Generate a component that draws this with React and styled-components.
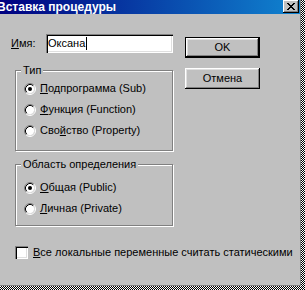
import React from "react";
import styled, { createGlobalStyle } from "styled-components";

const GlobalStyle = createGlobalStyle`
  html, body {
    margin: 0;
    padding: 0;
  }
  body {
    width: 305px;
    height: 290px;
    overflow: hidden;
    font-family: "Liberation Sans", Arial, sans-serif;
    font-size: 11px;
    color: #000;
  }
`;

const Hot = ({ children }) => <u>{children}</u>;

const CloseGlyph = () => (
  <svg width="8" height="7" viewBox="0 0 8 7">
    <path
      fill="#000"
      d="M0 0h2v1H0z M6 0h2v1H6z M1 1h2v1H1z M5 1h2v1H5z M2 2h4v1H2z M3 3h2v1H3z M2 4h4v1H2z M1 5h2v1H1z M5 5h2v1H5z M0 6h2v1H0z M6 6h2v1H6z"
    />
  </svg>
);

const Radio = ({ checked }) => (
  <RadioMark width="12" height="12" viewBox="0 0 12 12">
    <circle cx="6" cy="6" r="4.2" fill="#fff" />
    <path d="M2.11 9.89A5.5 5.5 0 0 1 9.89 2.11" stroke="#808080" fill="none" />
    <path d="M9.89 2.11A5.5 5.5 0 0 1 2.11 9.89" stroke="#fff" fill="none" />
    <path d="M2.82 9.18A4.5 4.5 0 0 1 9.18 2.82" stroke="#000" fill="none" />
    <path d="M9.18 2.82A4.5 4.5 0 0 1 2.82 9.18" stroke="#dfdfdf" fill="none" />
    {checked && <circle cx="6" cy="6" r="2" fill="#000" />}
  </RadioMark>
);

const Option = ({ checked, children }) => (
  <OptionRow>
    <Radio checked={checked} />
    <span>{children}</span>
  </OptionRow>
);

const App = () => {
  return (
    <>
      <GlobalStyle />
      <Screen>
        <Window>
          <TitleBar>
            <Title>Вставка процедуры</Title>
            <CloseButton>
              <CloseGlyph />
            </CloseButton>
          </TitleBar>
          <Body>
            <LeftColumn>
              <NameRow>
                <Label>
                  <Hot>И</Hot>мя:
                </Label>
                <TextField>
                  Оксана
                  <Caret />
                </TextField>
              </NameRow>
              <Group $height={81} $padTop={1}>
                <Legend>Тип</Legend>
                <Option checked>
                  <Hot>П</Hot>одпрограмма (Sub)
                </Option>
                <Option>
                  <Hot>Ф</Hot>ункция (Function)
                </Option>
                <Option>
                  Сво<Hot>й</Hot>ство (Property)
                </Option>
              </Group>
              <Group $height={62} $padTop={6} $gap={13}>
                <Legend>Область определения</Legend>
                <Option checked>
                  <Hot>О</Hot>бщая (Public)
                </Option>
                <Option>
                  <Hot>Л</Hot>ичная (Private)
                </Option>
              </Group>
            </LeftColumn>
            <RightColumn>
              <Button $default>OK</Button>
              <Button>Отмена</Button>
            </RightColumn>
            <CheckRow>
              <CheckBox />
              <span>
                <Hot>В</Hot>се локальные переменные считать статическими
              </span>
            </CheckRow>
          </Body>
        </Window>
      </Screen>
    </>
  );
};

const Screen = styled.div`
  width: 305px;
  height: 290px;
  box-sizing: border-box;
  padding: 0 4px 4px 0;
  background: repeating-conic-gradient(#000 0 25%, #fff 0 50%) 0 0 / 2px 2px;
`;

const Window = styled.div`
  height: 100%;
  box-sizing: border-box;
  display: flex;
  flex-direction: column;
  background: #c0c0c0;
  border-right: 1px solid #808080;
  border-bottom: 1px solid #808080;
`;

const TitleBar = styled.div`
  height: 14px;
  display: flex;
  align-items: flex-start;
  justify-content: space-between;
  background: linear-gradient(to right, #000080, #1084d0);
  overflow: hidden;
`;

const Title = styled.div`
  margin-left: -3px;
  color: #fff;
  font-weight: bold;
  font-size: 12px;
  line-height: 14px;
  white-space: nowrap;
`;

const CloseButton = styled.div`
  width: 16px;
  height: 13px;
  margin-right: 1px;
  box-sizing: border-box;
  display: flex;
  align-items: center;
  justify-content: center;
  background: #c0c0c0;
  box-shadow: inset -1px -1px #000, inset 1px 1px #fff, inset -2px -2px #808080;
`;

const Body = styled.div`
  display: grid;
  grid-template-columns: 162px 75px;
  column-gap: 12px;
  align-items: start;
  padding-left: 11px;
`;

const LeftColumn = styled.div`
  display: flex;
  flex-direction: column;
`;

const RightColumn = styled.div`
  display: flex;
  flex-direction: column;
  gap: 10px;
  padding-top: 23px;
`;

const NameRow = styled.div`
  display: flex;
  align-items: center;
  margin-top: 20px;
  height: 19px;
`;

const Label = styled.span`
  width: 35px;
  line-height: 13px;
`;

const TextField = styled.div`
  width: 127px;
  height: 19px;
  box-sizing: border-box;
  display: flex;
  align-items: center;
  padding-left: 2px;
  background: #fff;
  line-height: 13px;
  box-shadow: inset 1px 1px #808080, inset 2px 2px #000, inset -1px -1px #fff,
    inset -2px -2px #dfdfdf;
`;

const Caret = styled.span`
  width: 1px;
  height: 13px;
  margin-left: 1px;
  background: #000;
`;

const Group = styled.div`
  margin: ${(p) => p.$gap || 17}px 0 0 4px;
  width: 158px;
  height: ${(p) => p.$height}px;
  box-sizing: border-box;
  display: flex;
  flex-direction: column;
  border: 1px solid #808080;
  box-shadow: inset 1px 1px #fff, 1px 1px #fff;

  & > :nth-child(2) {
    margin-top: ${(p) => p.$padTop}px;
  }
`;

const Legend = styled.div`
  width: fit-content;
  margin: -7px 0 0 5px;
  padding: 0 2px;
  background: #c0c0c0;
  line-height: 13px;
  white-space: nowrap;
`;

const OptionRow = styled.div`
  height: 21px;
  display: flex;
  align-items: center;
  gap: 4px;
  padding-left: 8px;
  line-height: 13px;
  white-space: nowrap;
`;

const RadioMark = styled.svg`
  flex: none;
  display: block;
`;

const Button = styled.div`
  height: 21px;
  box-sizing: border-box;
  display: flex;
  align-items: center;
  justify-content: center;
  background: #c0c0c0;
  border: ${(p) => (p.$default ? "1px solid #000" : "none")};
  box-shadow: inset -1px -1px #000, inset 1px 1px #fff, inset -2px -2px #808080,
    inset 2px 2px #dfdfdf;
  line-height: 13px;
`;

const CheckRow = styled.div`
  grid-column: 1 / -1;
  display: flex;
  align-items: center;
  gap: 5px;
  margin: 20px 0 0 4px;
  line-height: 13px;
  white-space: nowrap;
`;

const CheckBox = styled.div`
  width: 13px;
  height: 13px;
  flex: none;
  box-sizing: border-box;
  background: #fff;
  box-shadow: inset 1px 1px #808080, inset 2px 2px #000, inset -1px -1px #fff,
    inset -2px -2px #dfdfdf;
`;

export default App;
